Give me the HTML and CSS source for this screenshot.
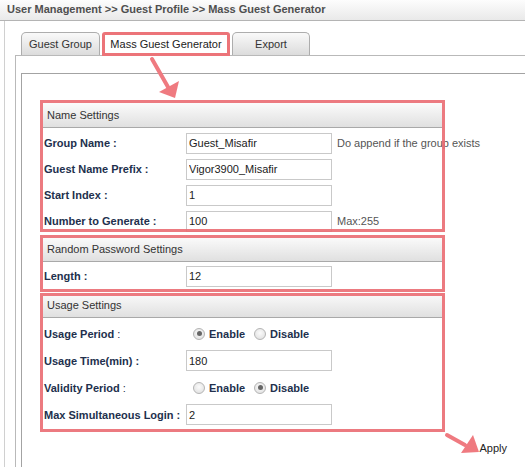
FILE: index.html
```html
<!DOCTYPE html>
<html>
<head>
<meta charset="utf-8">
<link rel="stylesheet" href="styles.css">
</head>
<body>
<div class="titlebar">User Management &gt;&gt; Guest Profile &gt;&gt; Mass Guest Generator</div>
<div class="frame">
  <div class="tabs">
    <div class="tab tab-group">Guest Group</div>
    <div class="tab tab-active">Mass Guest Generator</div>
    <div class="tab tab-export">Export</div>
  </div>
  <div class="panel">
    <div class="inner">
      <div class="sec sec-name">
        <div class="sec-head">Name Settings</div>
        <div class="rows rows-name">
          <div class="row"><div class="lbl">Group Name :</div><input class="field" type="text" value="Guest_Misafir"><span class="note">Do append if the group exists</span></div>
          <div class="row"><div class="lbl">Guest Name Prefix :</div><input class="field" type="text" value="Vigor3900_Misafir"></div>
          <div class="row"><div class="lbl">Start Index :</div><input class="field" type="text" value="1"></div>
          <div class="row"><div class="lbl">Number to Generate :</div><input class="field" type="text" value="100"><span class="note">Max:255</span></div>
        </div>
      </div>
      <div class="sec sec-pass">
        <div class="sec-head">Random Password Settings</div>
        <div class="rows rows-pass">
          <div class="row"><div class="lbl">Length :</div><input class="field" type="text" value="12"></div>
        </div>
      </div>
      <div class="sec sec-usage">
        <div class="sec-head">Usage Settings</div>
        <div class="rows rows-usage">
          <div class="row row-u"><div class="lbl">Usage Period <span class="colon">:</span></div>
            <span class="radio radio-first checked"></span><span class="rlabel">Enable</span>
            <span class="radio radio-second"></span><span class="rlabel">Disable</span>
          </div>
          <div class="row row-u"><div class="lbl">Usage Time(min) :</div><input class="field" type="text" value="180"></div>
          <div class="row row-u"><div class="lbl">Validity Period <span class="colon">:</span></div>
            <span class="radio radio-first"></span><span class="rlabel">Enable</span>
            <span class="radio radio-second checked"></span><span class="rlabel">Disable</span>
          </div>
          <div class="row row-u"><div class="lbl">Max Simultaneous Login :</div><input class="field" type="text" value="2"></div>
        </div>
      </div>
      <div class="actions"><span class="apply">Apply</span></div>
    </div>
  </div>
</div>
<svg class="annot" width="525" height="467" viewBox="0 0 525 467">
  <line x1="152" y1="59" x2="168" y2="87" stroke="#ef7a80" stroke-width="4" stroke-linecap="round"/>
  <polygon points="159,92 179,81 175,98" fill="#ef7a80"/>
  <line x1="447" y1="435" x2="465" y2="445" stroke="#ef7a80" stroke-width="4" stroke-linecap="round"/>
  <polygon points="473,435 461,453 479,452" fill="#ef7a80"/>
</svg>
</body>
</html>
```

FILE: styles.css
```css
html, body {
  margin: 0;
  padding: 0;
}
body {
  width: 525px;
  height: 467px;
  overflow: hidden;
  position: relative;
  background: #fff;
  font-family: "Liberation Sans", Arial, sans-serif;
  font-size: 11px;
  color: #333;
}
.titlebar {
  height: 21px;
  box-sizing: border-box;
  border-bottom: 1px solid #b4b4b4;
  background: linear-gradient(#fdfdfd, #e9e9e9);
  font-weight: bold;
  color: #4f4f4f;
  line-height: 19px;
  padding-left: 7px;
  white-space: nowrap;
  overflow: hidden;
}
.frame {
  margin-left: 4px;
  border-left: 1px solid #d0d0d0;
  padding-left: 10px;
  height: 446px;
  overflow: hidden;
}
.tabs {
  display: flex;
  gap: 2px;
  padding-left: 6px;
  padding-top: 11px;
  height: 23px;
  align-items: flex-start;
}
.tab {
  box-sizing: border-box;
  height: 23px;
  border: 1px solid #adadad;
  border-bottom: none;
  border-radius: 5px 5px 0 0;
  background: linear-gradient(#f9f9f9, #dcdcdc);
  color: #333;
  display: flex;
  align-items: center;
  justify-content: center;
  white-space: nowrap;
}
.tab-group { width: 79px; }
.tab-export { width: 78px; }
.tab-active {
  width: 128px;
  height: 24px;
  background: #fff;
  border: 3px solid #ec7479;
  border-radius: 3px 3px 0 0;
  color: #222;
}
.panel {
  border-top: 1px solid #b9b9b9;
  border-left: 1px solid #b9b9b9;
  padding: 17px 0 0 5px;
  height: 394px;
}
.inner {
  border-top: 1px solid #a3a3a3;
  border-left: 1px solid #a3a3a3;
  padding: 26px 0 0 18px;
  height: 367px;
}
.sec {
  position: relative;
  width: 405px;
  box-sizing: border-box;
  padding: 3px 3px 0;
}
.sec::after {
  content: "";
  position: absolute;
  left: 0;
  right: 0;
  top: 0;
  bottom: 0;
  border: 3px solid rgba(234, 108, 114, 0.9);
  pointer-events: none;
}
.sec-name::after { bottom: 2px; }
.sec-pass::after { top: 1px; bottom: -3px; }
.sec-usage { padding-top: 4px; padding-bottom: 4px; }
.sec-usage::after { top: 4px; }
.sec-head {
  height: 24px;
  border-bottom: 1px solid #a9a9a9;
  background: linear-gradient(#fbfbfb, #e0e0e0);
  padding-left: 4px;
  line-height: 24px;
  color: #333;
}
.rows-name { padding-top: 2px; }
.rows-pass { padding-top: 1px; }
.rows-usage { padding-top: 2px; }
.row {
  display: flex;
  align-items: center;
  height: 26px;
}
.row-u { height: 27px; }
.lbl {
  flex: 0 0 143px;
  box-sizing: border-box;
  padding-left: 1px;
  font-weight: bold;
  color: #22304d;
  white-space: nowrap;
}
.colon { font-weight: normal; }
.field {
  width: 146px;
  height: 21px;
  box-sizing: border-box;
  margin: 0;
  border: 1px solid #c9c9c9;
  padding: 0 2px;
  font-family: "Liberation Sans", Arial, sans-serif;
  font-size: 11px;
  color: #222;
  background: #fff;
  outline: none;
}
.note {
  margin-left: 5px;
  color: #555;
  white-space: nowrap;
}
.radio {
  width: 12px;
  height: 12px;
  box-sizing: border-box;
  border: 1px solid #b4b4b4;
  border-radius: 50%;
  background: radial-gradient(circle at 50% 40%, #fbfbfb, #dcdcdc);
  display: flex;
  align-items: center;
  justify-content: center;
}
.radio.checked::before {
  content: "";
  width: 5px;
  height: 5px;
  border-radius: 50%;
  background: #666;
}
.radio-first { margin-left: 7px; }
.radio-second { margin-left: 9px; }
.rlabel {
  margin-left: 4px;
  font-weight: bold;
  color: #22304d;
}
.actions {
  width: 467px;
  display: flex;
  justify-content: flex-end;
  margin-top: 9px;
  line-height: 14px;
}
.apply { color: #222; }
.annot {
  position: absolute;
  left: 0;
  top: 0;
  pointer-events: none;
}
```
